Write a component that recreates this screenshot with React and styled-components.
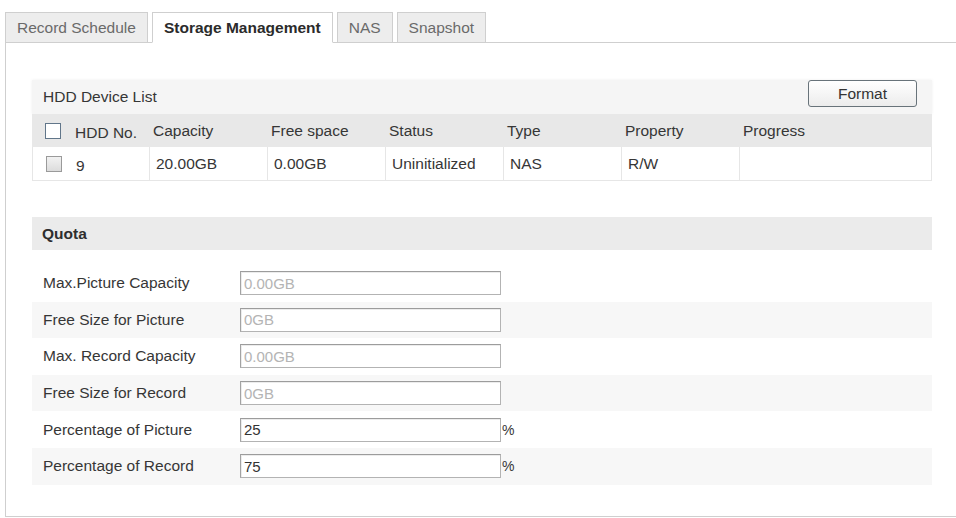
import styled, { createGlobalStyle } from 'styled-components'

const GlobalStyle = createGlobalStyle`
  body {
    margin: 0;
    background: #fff;
    color: #363636;
    font-family: "Liberation Sans", Arial, sans-serif;
    font-size: 15.5px;
  }
`;

const Page = styled.div`
  padding: 12px 0 0 5px;
  height: 518px;
  box-sizing: border-box;
  overflow: hidden;
`;

const TabBar = styled.div`
  display: flex;
  gap: 4px;
  position: relative;
  z-index: 1;
  margin-bottom: -1px;
`;

const Tab = styled.div`
  height: 31px;
  box-sizing: border-box;
  padding: 0 11px;
  display: flex;
  align-items: center;
  border: 1px solid #cfcfcf;
  border-bottom-color: ${p => (p.$active ? '#fff' : '#cfcfcf')};
  background: ${p => (p.$active ? '#fff' : '#ededed')};
  color: ${p => (p.$active ? '#2b2b2b' : '#6a6a6a')};
  font-weight: ${p => (p.$active ? 'bold' : 'normal')};
`;

const Panel = styled.div`
  height: 475px;
  box-sizing: border-box;
  border: 1px solid #cfcfcf;
  border-right: none;
  padding: 37px 24px 0 26px;
`;

const SectionHead = styled.div`
  height: 34px;
  display: flex;
  justify-content: space-between;
  padding: 0 15px 0 11px;
  background: #f5f5f5;
  box-shadow: 0 0 3px #f0f0f0;
`;

const HeadTitle = styled.div`
  align-self: center;
`;

const FormatButton = styled.button`
  width: 109px;
  height: 27px;
  border: 1px solid #68737a;
  border-radius: 3px;
  background: linear-gradient(#ffffff, #ececec);
  color: #333;
  font-family: inherit;
  font-size: 15.5px;
  padding: 0;
`;

const TableGrid = styled.div`
  display: grid;
  grid-template-columns: 118px 118px 118px 118px 118px 118px 1fr;
`;

const HeadCell = styled.div`
  height: 33px;
  display: flex;
  align-items: center;
  gap: 14px;
  padding-left: ${p => (p.$first ? '13px' : '3px')};
  background: #e8e8e8;
`;

const BodyCell = styled.div`
  height: 34px;
  box-sizing: border-box;
  display: flex;
  align-items: center;
  gap: 14px;
  padding-left: ${p => (p.$first ? '13px' : '6px')};
  background: #fff;
  border-right: 1px solid #e6e6e6;
  border-bottom: 1px solid #e6e6e6;
  border-left: ${p => (p.$first ? '1px solid #e6e6e6' : 'none')};
`;

const Lowered = styled.span`
  margin-top: 5px;
`;

const Check = styled.span`
  width: 14px;
  height: 14px;
  flex: none;
  border: 1px solid ${p => (p.$muted ? '#9a9a9a' : '#61768a')};
  background: ${p => (p.$muted ? 'linear-gradient(#f2f2f2, #dcdcdc)' : '#fff')};
`;

const QuotaHead = styled.div`
  margin-top: 36px;
  height: 33px;
  display: flex;
  align-items: center;
  padding-left: 10px;
  background: #ebebeb;
  font-weight: bold;
  color: #2e2e2e;
`;

const FormList = styled.div`
  margin-top: 15px;
`;

const FormRow = styled.div`
  height: 36.6px;
  display: grid;
  grid-template-columns: 197px 261px auto;
  align-items: center;
  padding-left: 11px;
  background: ${p => (p.$striped ? '#f7f7f7' : 'transparent')};
`;

const Field = styled.input`
  width: 261px;
  height: 24px;
  box-sizing: border-box;
  border: 1px solid #b3b3b3;
  border-top-color: #9c9c9c;
  border-left-color: #a3a3a3;
  box-shadow: inset 1px 1px 0 #ececec;
  padding: 0 3px;
  background: #fff;
  color: #333;
  font-family: inherit;
  font-size: 15px;
  outline: none;

  &:disabled {
    background: #fff;
    color: #b4b4b4;
  }
`;

const Unit = styled.span`
  padding-left: 1px;
  font-size: 14px;
`;

const tabs = ['Record Schedule', 'Storage Management', 'NAS', 'Snapshot'];

const columns = ['Capacity', 'Free space', 'Status', 'Type', 'Property', 'Progress'];
const disk = ['20.00GB', '0.00GB', 'Uninitialized', 'NAS', 'R/W', ''];

const quota = [
  { label: 'Max.Picture Capacity', value: '0.00GB', locked: true },
  { label: 'Free Size for Picture', value: '0GB', locked: true },
  { label: 'Max. Record Capacity', value: '0.00GB', locked: true },
  { label: 'Free Size for Record', value: '0GB', locked: true },
  { label: 'Percentage of Picture', value: '25', unit: '%' },
  { label: 'Percentage of Record', value: '75', unit: '%' },
];

const App = () => {
  return (
    <>
      <GlobalStyle />
      <Page>
        <TabBar>
          {tabs.map((t, i) => (
            <Tab key={t} $active={i === 1}>{t}</Tab>
          ))}
        </TabBar>

        <Panel>
          <SectionHead>
            <HeadTitle>HDD Device List</HeadTitle>
            <FormatButton>Format</FormatButton>
          </SectionHead>

          <TableGrid>
            <HeadCell $first>
              <Check />
              <Lowered>HDD No.</Lowered>
            </HeadCell>
            {columns.map(c => (
              <HeadCell key={c}>{c}</HeadCell>
            ))}

            <BodyCell $first>
              <Check $muted />
              <Lowered>9</Lowered>
            </BodyCell>
            {disk.map((d, i) => (
              <BodyCell key={i}>{d}</BodyCell>
            ))}
          </TableGrid>

          <QuotaHead>Quota</QuotaHead>

          <FormList>
            {quota.map((q, i) => (
              <FormRow key={q.label} $striped={i % 2 === 1}>
                <span>{q.label}</span>
                <Field defaultValue={q.value} disabled={q.locked} />
                {q.unit ? <Unit>{q.unit}</Unit> : <span />}
              </FormRow>
            ))}
          </FormList>
        </Panel>
      </Page>
    </>
  )
}

export default App
